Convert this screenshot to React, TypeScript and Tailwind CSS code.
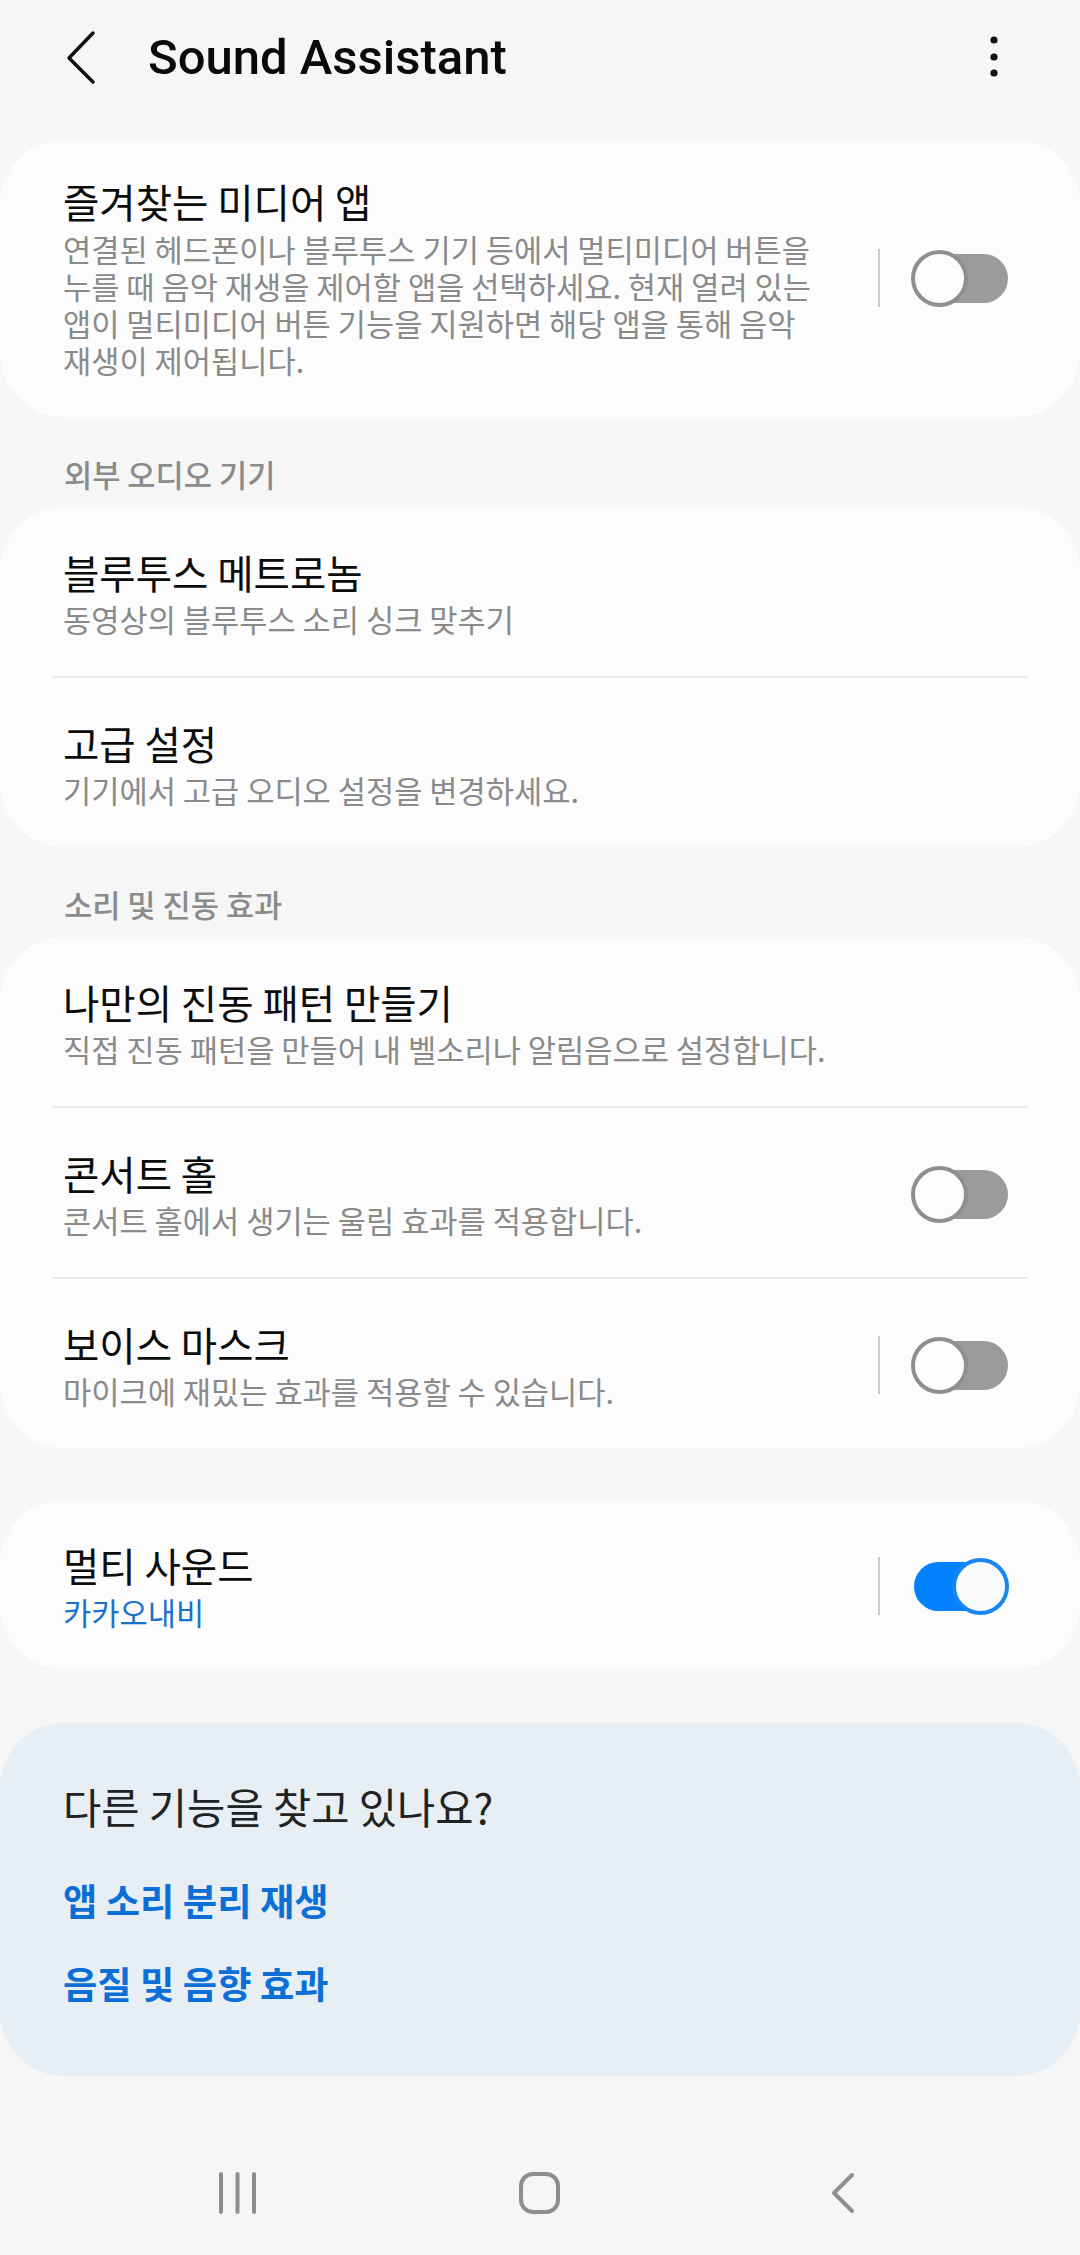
import { ReactNode } from "react";

function Toggle({ on = false }: { on?: boolean }) {
  return (
    <div className="relative h-[57px] w-[98px] shrink-0">
      <div
        className={
          on
            ? "absolute left-[3px] right-[9px] top-[4px] h-[49px] rounded-full bg-[#0381fe]"
            : "absolute left-[9px] right-[1px] top-[4px] h-[49px] rounded-full bg-[#9b9b9b]"
        }
      />
      <div
        className={
          on
            ? "absolute right-0 top-0 h-[57px] w-[57px] rounded-full border-[4px] border-[#1a86f2] bg-[#f8fafc]"
            : "absolute left-0 top-0 h-[57px] w-[57px] rounded-full border-[4px] border-[#8f8f8f] bg-[#fcfcfc]"
        }
      />
    </div>
  );
}

function VDivider() {
  return <div className="mr-[31px] h-[58px] w-[2px] shrink-0 bg-[#cacaca]" />;
}

interface RowProps {
  title: string;
  sub: string;
  subBlue?: boolean;
  /** 오른쪽 스위치 */
  toggle?: "on" | "off";
  divider?: boolean;
}

function Row({ title, sub, subBlue = false, toggle, divider = false }: RowProps) {
  return (
    <div className="flex items-center pb-[39px] pl-[63px] pr-[71px] pt-[42px]">
      <div className="min-w-0 flex-1">
        <div className="text-[39.5px] leading-[46px] text-[#0c0c0c]">{title}</div>
        <div
          className={`mt-[5px] text-[30.7px] leading-[37px] ${subBlue ? "text-[#1a72cc]" : "text-[#8a8a8a]"}`}
        >
          {sub}
        </div>
      </div>
      {divider && <VDivider />}
      {toggle && <Toggle on={toggle === "on"} />}
    </div>
  );
}

function Card({ children, className = "" }: { children: ReactNode; className?: string }) {
  return <div className={`rounded-[64px] bg-[#fcfcfc] ${className}`}>{children}</div>;
}

function HDivider() {
  return <div className="mx-[52px] h-[2px] bg-[#e9e9e9]" />;
}

function SectionLabel({ children }: { children: ReactNode }) {
  return (
    <div className="pb-[15px] pl-[64px] pt-[38px] text-[30.7px] font-medium leading-[37px] text-[#8b8b8b]">
      {children}
    </div>
  );
}

const mediaDesc = [
  "연결된 헤드폰이나 블루투스 기기 등에서 멀티미디어 버튼을",
  "누를 때 음악 재생을 제어할 앱을 선택하세요. 현재 열려 있는",
  "앱이 멀티미디어 버튼 기능을 지원하면 해당 앱을 통해 음악",
  "재생이 제어됩니다.",
];

export default function App() {
  return (
    <div className="flex min-h-[2255px] w-[1080px] flex-col bg-[#f6f6f6] font-['Noto_Sans_CJK_KR','Noto_Sans',sans-serif]">
      {/* 상단 바 */}
      <div className="flex h-[114px] items-center">
        <svg className="ml-[60px] shrink-0" width="40" height="60" viewBox="0 0 40 60">
          <polyline
            points="33,6 9,31 33,55"
            fill="none"
            stroke="#111"
            strokeWidth="3.5"
            strokeLinecap="round"
            strokeLinejoin="round"
          />
        </svg>
        <div className="ml-[48px] font-['Roboto',sans-serif] text-[49px] font-medium leading-none text-[#0a0a0a]">
          Sound Assistant
        </div>
        <svg className="ml-auto mr-[76px] shrink-0" width="20" height="50" viewBox="0 0 20 50">
          <circle cx="10" cy="8" r="3.6" fill="#111" />
          <circle cx="10" cy="25" r="3.6" fill="#111" />
          <circle cx="10" cy="41" r="3.6" fill="#111" />
        </svg>
      </div>

      {/* 즐겨찾는 미디어 앱 */}
      <Card className="mt-[26px]">
        <div className="flex items-center pb-[39px] pl-[63px] pr-[71px] pt-[38px]">
          <div className="min-w-0 flex-1">
            <div className="text-[39.5px] leading-[46px] text-[#0c0c0c]">즐겨찾는 미디어 앱</div>
            <div className="mt-[6px] text-[30.7px] text-[#8a8a8a]">
              {mediaDesc.map((line) => (
                <div key={line} className="h-[37px] whitespace-nowrap leading-[37px]">
                  {line}
                </div>
              ))}
            </div>
          </div>
          <VDivider />
          <Toggle />
        </div>
      </Card>

      <SectionLabel>외부 오디오 기기</SectionLabel>
      <Card>
        <Row title="블루투스 메트로놈" sub="동영상의 블루투스 소리 싱크 맞추기" />
        <HDivider />
        <Row title="고급 설정" sub="기기에서 고급 오디오 설정을 변경하세요." />
      </Card>

      <SectionLabel>소리 및 진동 효과</SectionLabel>
      <Card>
        <Row title="나만의 진동 패턴 만들기" sub="직접 진동 패턴을 만들어 내 벨소리나 알림음으로 설정합니다." />
        <HDivider />
        <Row title="콘서트 홀" sub="콘서트 홀에서 생기는 울림 효과를 적용합니다." toggle="off" />
        <HDivider />
        <Row title="보이스 마스크" sub="마이크에 재밌는 효과를 적용할 수 있습니다." toggle="off" divider />
      </Card>

      <Card className="mt-[52px]">
        <Row title="멀티 사운드" sub="카카오내비" subBlue toggle="on" divider />
      </Card>

      {/* 다른 기능 안내 */}
      <div className="mt-[54px] rounded-[64px] bg-[#e7eef4] pb-[70px] pl-[63px] pt-[58px]">
        <div className="text-[41.6px] leading-[50px] text-[#222]">다른 기능을 찾고 있나요?</div>
        <div className="mt-[46px] text-[37.3px] font-semibold leading-[46px] text-[#0b6fd6]">앱 소리 분리 재생</div>
        <div className="mt-[37px] text-[37.3px] font-semibold leading-[46px] text-[#0b6fd6]">음질 및 음향 효과</div>
      </div>

      {/* 내비게이션 바 */}
      <div className="mt-auto flex h-[125px] items-center justify-center gap-[203px]">
        <div className="flex w-[100px] justify-center">
          <svg width="40" height="44" viewBox="0 0 40 44">
            <g stroke="#8e8e8e" strokeWidth="4" strokeLinecap="round">
              <line x1="4" y1="3" x2="4" y2="41" />
              <line x1="20.5" y1="3" x2="20.5" y2="41" />
              <line x1="37" y1="3" x2="37" y2="41" />
            </g>
          </svg>
        </div>
        <div className="flex w-[100px] justify-center">
          <svg width="42" height="44" viewBox="0 0 42 44">
            <rect x="2" y="3" width="37" height="38" rx="12" fill="none" stroke="#8e8e8e" strokeWidth="4" />
          </svg>
        </div>
        <div className="flex w-[100px] justify-center">
          <svg width="30" height="44" viewBox="0 0 30 44">
            <polyline
              points="24,4 6,22 24,40"
              fill="none"
              stroke="#8e8e8e"
              strokeWidth="4"
              strokeLinecap="round"
              strokeLinejoin="round"
            />
          </svg>
        </div>
      </div>
    </div>
  );
}
